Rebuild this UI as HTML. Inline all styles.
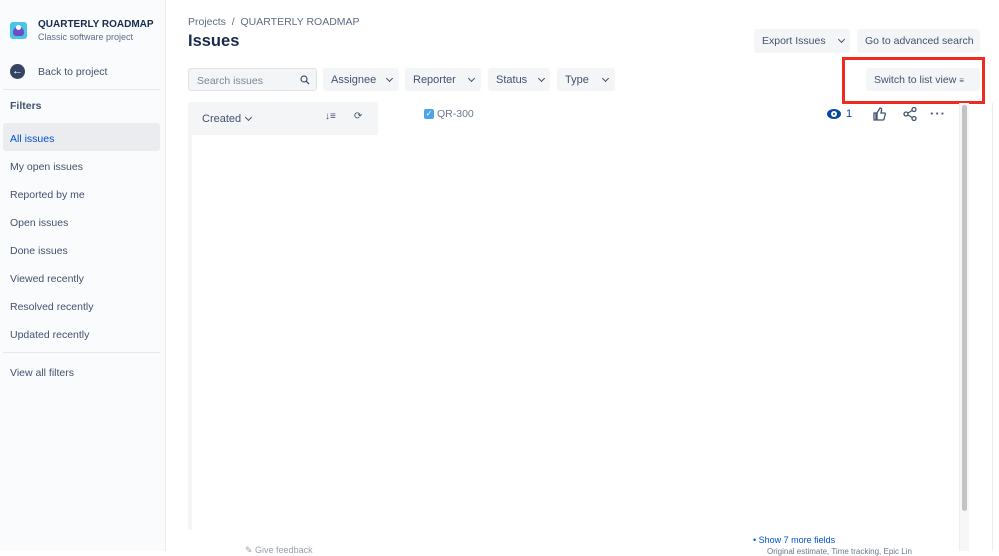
<!DOCTYPE html>
<html><head><meta charset="utf-8"><style>
*{box-sizing:border-box;margin:0;padding:0}
body{width:999px;height:551px;overflow:hidden;background:#fff;font-family:"Liberation Sans",sans-serif;color:#42526e;position:relative;font-size:11px}
.a{position:absolute}
.sb{left:0;top:0;width:166px;height:551px;background:#fafbfc;border-right:1px solid #ebecf0}
.item{position:absolute;left:10px;font-size:10.5px;color:#42526e}
.btn{position:absolute;background:#f4f5f7;border-radius:3px;font-size:10.5px;color:#42526e;height:24px;line-height:25px;padding:0 8px;white-space:nowrap}
.chev{display:inline-block;width:5px;height:5px;border-right:1.5px solid #42526e;border-bottom:1.5px solid #42526e;transform:rotate(45deg);position:absolute;top:8px}
</style></head><body>
<div class="a sb">
  <div class="a" style="left:10px;top:22px;width:17px;height:17px;background:#4bc4e8;border-radius:3px"><div class="a" style="left:3px;top:5px;width:11px;height:9px;background:#6c4fbf;border-radius:5px 5px 3px 3px"></div><div class="a" style="left:6px;top:3px;width:5px;height:5px;background:#fff;border-radius:50%"></div></div>
  <div class="a" style="left:38px;top:19px;font-size:10px;font-weight:bold;color:#172b4d">QUARTERLY ROADMAP</div>
  <div class="a" style="left:38px;top:32px;font-size:9px;color:#5e6c84">Classic software project</div>
  <div class="a" style="left:10px;top:64px;width:15px;height:15px;border-radius:50%;background:#344563;color:#fff;font-size:11px;line-height:14px;text-align:center;font-weight:bold">←</div>
  <div class="item" style="left:38px;top:66px;font-size:10.5px">Back to project</div>
  <div class="a" style="left:3px;top:89px;width:157px;height:1px;background:#e6e8ec"></div>
  <div class="item" style="top:100px;font-weight:bold;color:#42526e">Filters</div>
  <div class="a" style="left:3px;top:123px;width:157px;height:28px;background:#ebecf0;border-radius:3px"></div>
  <div class="item" style="top:133px;color:#0052cc">All issues</div>
  <div class="item" style="top:161px">My open issues</div>
  <div class="item" style="top:189px">Reported by me</div>
  <div class="item" style="top:217px">Open issues</div>
  <div class="item" style="top:245px">Done issues</div>
  <div class="item" style="top:273px">Viewed recently</div>
  <div class="item" style="top:301px">Resolved recently</div>
  <div class="item" style="top:329px">Updated recently</div>
  <div class="a" style="left:3px;top:352px;width:157px;height:1px;background:#e6e8ec"></div>
  <div class="item" style="top:367px">View all filters</div>
</div>
<div class="a" style="left:188px;top:16px;font-size:10.5px;color:#5e6c84">Projects &nbsp;/&nbsp; QUARTERLY ROADMAP</div>
<div class="a" style="left:188px;top:32px;font-size:16.5px;font-weight:bold;color:#172b4d">Issues</div>
<div class="btn" style="left:754px;top:29px;width:96px">Export Issues<span class="chev" style="left:85px"></span></div>
<div class="btn" style="left:857px;top:29px;width:123px;padding:0 0 0 8px">Go to advanced search</div>
<div class="a" style="left:188px;top:68px;width:129px;height:23px;background:#f4f5f7;border:1px solid #dfe1e6;border-radius:3px;font-size:10.5px;color:#7a869a;padding:6px 8px">Search issues
<svg class="a" style="right:6px;top:6px" width="10" height="10" viewBox="0 0 10 10"><circle cx="4" cy="4" r="3" fill="none" stroke="#42526e" stroke-width="1.2"/><path d="M6.3 6.3L9 9" stroke="#42526e" stroke-width="1.3"/></svg></div>
<div class="btn" style="left:323px;top:68px;width:76px;height:23px;line-height:24px;font-size:11px">Assignee<span class="chev" style="left:64px"></span></div>
<div class="btn" style="left:405px;top:68px;width:76px;height:23px;line-height:24px;font-size:11px">Reporter<span class="chev" style="left:64px"></span></div>
<div class="btn" style="left:488px;top:68px;width:62px;height:23px;line-height:24px;font-size:11px">Status<span class="chev" style="left:51px"></span></div>
<div class="btn" style="left:557px;top:68px;width:58px;height:23px;line-height:24px;font-size:11px">Type<span class="chev" style="left:46px"></span></div>
<div class="btn" style="left:866px;top:68px;width:114px;height:23px;line-height:24px">Switch to list view <span style="font-size:8px">&#8801;</span></div>
<div class="a" style="left:842px;top:57px;width:143px;height:47px;border:3px solid #ef2a1f"></div>
<div class="a" style="left:188px;top:102px;width:190px;height:428px;background:#f4f5f7;border-radius:3px 3px 0 0"></div>
<div class="a" style="left:192px;top:135px;width:186px;height:395px;background:#fff"></div>
<div class="a" style="left:202px;top:113px;font-size:11px;color:#42526e">Created</div>
<span class="chev a" style="left:246px;top:115px"></span>
<div class="a" style="left:325px;top:111px;font-size:10px">↓&#8801;</div>
<div class="a" style="left:354px;top:111px;font-size:10px">⟳</div>
<div class="a" style="left:424px;top:109px;width:10px;height:10px;background:#4ba5e8;border-radius:2px;color:#fff;font-size:8px;line-height:10px;text-align:center">✓</div>
<div class="a" style="left:437px;top:108px;font-size:10.5px;color:#6b778c">QR-300</div>
<div class="a" style="left:827px;top:109px;width:14px;height:10px;background:#0747a6;border-radius:50%"></div>
<div class="a" style="left:831px;top:111px;width:6px;height:6px;background:#fff;border-radius:50%"></div>
<div class="a" style="left:833px;top:113px;width:2px;height:2px;background:#0747a6;border-radius:50%"></div>
<div class="a" style="left:846px;top:108px;font-size:11px;color:#0747a6">1</div>
<svg class="a" style="left:872px;top:107px" width="14" height="14" viewBox="0 0 14 14"><path d="M2 6h2v7H2zM5 6l3-5c1 0 2 1 1.5 2.5L9 6h3.5c.5 0 1 .5.8 1.2l-1.3 5c-.2.5-.6.8-1 .8H5z" fill="none" stroke="#42526e" stroke-width="1.3"/></svg>
<svg class="a" style="left:903px;top:107px" width="14" height="14" viewBox="0 0 14 14"><circle cx="3" cy="7" r="2" fill="none" stroke="#42526e" stroke-width="1.3"/><circle cx="11" cy="2.5" r="2" fill="none" stroke="#42526e" stroke-width="1.3"/><circle cx="11" cy="11.5" r="2" fill="none" stroke="#42526e" stroke-width="1.3"/><path d="M5 6l4-2.5M5 8l4 2.5" stroke="#42526e" stroke-width="1.3"/></svg>
<div class="a" style="left:930px;top:106px;font-size:13px;font-weight:bold;color:#42526e;letter-spacing:1px">···</div>
<div class="a" style="left:959px;top:103px;width:10px;height:448px;background:#f7f7f7;border-left:1px solid #eee"></div>
<div class="a" style="left:962px;top:105px;width:5px;height:406px;background:#c4c4c4;border-radius:3px"></div>
<div class="a" style="left:992px;top:103px;width:1px;height:448px;background:#ececec"></div>
<div class="a" style="left:245px;top:545px;font-size:9px;color:#97a0af">✎ Give feedback</div>
<div class="a" style="left:753px;top:535px;font-size:9px;color:#0052cc">• Show 7 more fields</div>
<div class="a" style="left:767px;top:547px;font-size:8px;color:#6b778c">Original estimate, Time tracking, Epic Lin</div>
</body></html>
